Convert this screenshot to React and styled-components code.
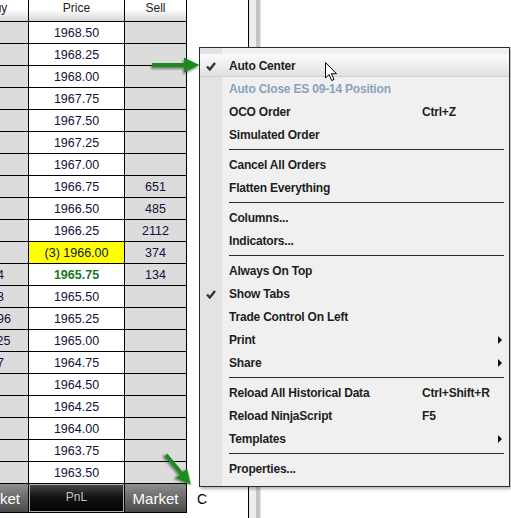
import React from "react";
import styled, { createGlobalStyle } from "styled-components";

const GlobalStyle = createGlobalStyle`
  body {
    margin: 0;
    background: #fff;
    font-family: "Liberation Sans", Arial, sans-serif;
    overflow: hidden;
  }
`;

const prices = [];
for (let i = 0; i < 21; i++) prices.push((1968.5 - i * 0.25).toFixed(2));

const buyVol = { "1965.75": "24", "1965.50": "13", "1965.25": "1096", "1965.00": "1125", "1964.75": "17" };
const sellVol = { "1966.75": "651", "1966.50": "485", "1966.25": "2112", "1966.00": "374", "1965.75": "134" };

const menuItems = [
    { label: "Auto Center", checked: true, active: true },
    { label: "Auto Close ES 09-14 Position", disabled: true },
    { label: "OCO Order", shortcut: "Ctrl+Z" },
    { label: "Simulated Order" },
    { sep: true },
    { label: "Cancel All Orders" },
    { label: "Flatten Everything" },
    { sep: true },
    { label: "Columns..." },
    { label: "Indicators..." },
    { sep: true },
    { label: "Always On Top" },
    { label: "Show Tabs", checked: true },
    { label: "Trade Control On Left" },
    { label: "Print", sub: true },
    { label: "Share", sub: true },
    { sep: true },
    { label: "Reload All Historical Data", shortcut: "Ctrl+Shift+R" },
    { label: "Reload NinjaScript", shortcut: "F5" },
    { label: "Templates", sub: true },
    { sep: true },
    { label: "Properties..." },
];

function App() {
    return (
        <Page>
            <GlobalStyle />
            <LadderClip>
                <Ladder>
                    <HeaderCell>Buy</HeaderCell>
                    <HeaderCell>Price</HeaderCell>
                    <HeaderCell>Sell</HeaderCell>
                    {prices.map((p) => {
                        const last = p === "1966.00";
                        const traded = p === "1965.75";
                        return (
                            <React.Fragment key={p}>
                                <Cell $bg="#dcdcdc">{buyVol[p]}</Cell>
                                <Cell $bg={last ? "#ffff00" : "#fff"} $color={traded ? "#137a26" : "#12123a"} $bold={traded}>
                                    {last ? `(3) ${p}` : p}
                                </Cell>
                                <Cell $bg="#dcdcdc">{sellVol[p]}</Cell>
                            </React.Fragment>
                        );
                    })}
                    <BarButton>Market</BarButton>
                    <BarButton $dark>PnL</BarButton>
                    <BarButton>Market</BarButton>
                </Ladder>
            </LadderClip>
            <Gap>
                <Letter>C</Letter>
            </Gap>
            <Rail />

            <Menu>
                {menuItems.map((m, i) =>
                    m.sep ? (
                        <Separator key={i} />
                    ) : (
                        <MenuItem key={i} $active={m.active} $disabled={m.disabled}>
                            <Check>
                                {m.checked && (
                                    <svg width="10" height="9" viewBox="0 0 10 9">
                                        <path d="M1 4.5 L3.8 7.5 L9 1" fill="none" stroke="#333" strokeWidth="2.4" />
                                    </svg>
                                )}
                            </Check>
                            <span>{m.label}</span>
                            <span>{m.shortcut}</span>
                            <SubArrow>
                                {m.sub && (
                                    <svg width="5" height="8" viewBox="0 0 5 8">
                                        <path d="M0 0 L4 4 L0 8 Z" fill="#111" />
                                    </svg>
                                )}
                            </SubArrow>
                        </MenuItem>
                    )
                )}
            </Menu>

            <Overlay width="511" height="518" viewBox="0 0 511 518">
                <defs>
                    <filter id="sh" x="-20%" y="-50%" width="140%" height="200%">
                        <feDropShadow dx="-1" dy="2" stdDeviation="1" floodColor="#000" floodOpacity="0.45" />
                    </filter>
                </defs>
                <polygon
                    points="152,63 184,63 184,57.5 199.5,65 184,72.5 184,67 152,67"
                    fill="#1c8a1c"
                    filter="url(#sh)"
                />
                <g transform="translate(166,455) rotate(50)">
                    <polygon points="0,-2 24,-2 24,-7.5 39,0 24,7.5 24,2 0,2" fill="#1c8a1c" filter="url(#sh)" />
                </g>
                <path
                    d="M325.5 62.5 L325.5 78 L329 74.5 L331.7 80.5 L334 79.5 L331.4 73.7 L336.5 73.7 Z"
                    fill="#fff"
                    stroke="#000"
                    strokeWidth="1"
                    strokeLinejoin="round"
                />
            </Overlay>
        </Page>
    );
}

const Page = styled.div`
    position: relative;
    width: 511px;
    height: 518px;
    display: flex;
    overflow: hidden;
    background: #fff;
`;

const LadderClip = styled.div`
    width: 187px;
    flex: none;
    overflow: hidden;
    align-self: flex-start;
`;

const Ladder = styled.div`
    margin-left: -34px;
    width: 221px;
    box-sizing: border-box;
    display: grid;
    grid-template-columns: 62px 95px 61px;
    grid-template-rows: repeat(22, 21px) 28px;
    gap: 1px;
    background: #000;
    border-right: 1px solid #000;
    border-bottom: 1px solid #000;
`;

const HeaderCell = styled.div`
    display: flex;
    align-items: flex-start;
    justify-content: center;
    padding-top: 1px;
    line-height: 14px;
    background: linear-gradient(#ffffff 0%, #ffffff 45%, #d6d6d6 100%);
    font-size: 12px;
    color: #222;
`;

const Cell = styled.div`
    display: flex;
    align-items: center;
    justify-content: center;
    background: ${(p) => p.$bg};
    color: ${(p) => p.$color || "#12123a"};
    font-weight: ${(p) => (p.$bold ? 700 : 400)};
    font-size: 12.5px;
`;

const BarButton = styled.div`
    display: flex;
    justify-content: center;
    align-items: ${(p) => (p.$dark ? "flex-start" : "center")};
    padding-top: ${(p) => (p.$dark ? "6px" : "0")};
    box-sizing: border-box;
    background: ${(p) =>
        p.$dark
            ? "linear-gradient(#4a4a4a 0%, #141414 45%, #000 100%)"
            : "linear-gradient(#8e8e8e 0%, #6a6a6a 50%, #4a4a4a 100%)"};
    box-shadow: ${(p) => (p.$dark ? "inset 0 0 0 1px #b0b0b0" : "none")};
    color: ${(p) => (p.$dark ? "#c4c4c4" : "#fff")};
    font-size: ${(p) => (p.$dark ? "12px" : "15px")};
`;

const Gap = styled.div`
    width: 61px;
    flex: none;
    display: flex;
    flex-direction: column;
    justify-content: flex-end;
    padding: 0 0 11px 10px;
    box-sizing: border-box;
`;

const Letter = styled.span`
    font-size: 14px;
    line-height: 16px;
    color: #000;
`;

const Rail = styled.div`
    width: 12px;
    flex: none;
    border-left: 1px solid #000;
    background: linear-gradient(to right, #ededed 0 7px, #c4c4c4 7px 11px, #e6e6e6 11px);
`;

const Menu = styled.div`
    position: absolute;
    left: 199px;
    top: 47px;
    width: 311px;
    box-sizing: border-box;
    padding: 6px 0;
    border: 1px solid #2c2c2c;
    background: linear-gradient(to right, #e3e3e3 0 22px, #f0f0f0 22px);
    box-shadow: 2px 2px 3px rgba(0, 0, 0, 0.3);
    font-family: "Liberation Sans", Arial, sans-serif;
    font-weight: 700;
    font-size: 12px;
    letter-spacing: -0.2px;
`;

const MenuItem = styled.div`
    height: 23px;
    display: grid;
    grid-template-columns: 29px 193px 1fr 11px;
    align-items: center;
    color: ${(p) => (p.$disabled ? "#8aa2ba" : "#1e1e1e")};
    background: ${(p) => (p.$active ? "linear-gradient(#fafafa 0%, #ececec 60%, #dedede 100%)" : "transparent")};
    box-shadow: ${(p) => (p.$active ? "inset 0 -1px 0 #d0d0d0" : "none")};
`;

const Check = styled.span`
    display: flex;
    justify-content: center;
    padding-right: 7px;
    padding-top: 1px;
`;

const SubArrow = styled.span`
    display: flex;
    align-items: center;
`;

const Separator = styled.div`
    height: 7px;
    margin: 0 5px 0 29px;
    display: flex;
    align-items: center;
    &::after {
        content: "";
        flex: 1;
        height: 1px;
        background: #2a2a2a;
    }
`;

const Overlay = styled.svg`
    position: absolute;
    left: 0;
    top: 0;
    pointer-events: none;
`;

export default App;
